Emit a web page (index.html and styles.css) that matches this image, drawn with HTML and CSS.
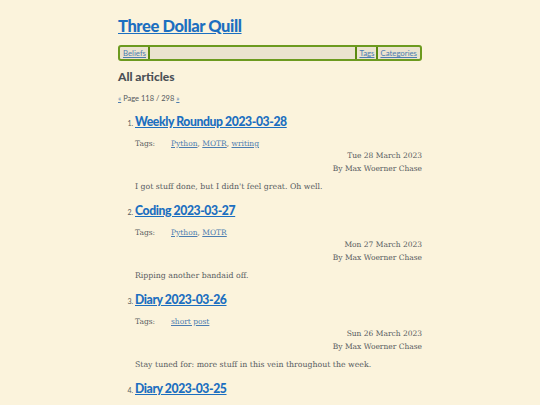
FILE: index.html
```
<!DOCTYPE html>
<html>
<head>
<meta charset="utf-8">
<link rel="stylesheet" href="styles.css">
</head>
<body>
<div class="page">
  <h1 class="site-title"><a href="#">Three Dollar Quill</a></h1>
  <nav class="nav">
    <a href="#" class="nav-item sep-right">Beliefs</a>
    <span class="nav-spacer"></span>
    <a href="#" class="nav-item sep-left">Tags</a>
    <a href="#" class="nav-item sep-left">Categories</a>
  </nav>
  <h2 class="section-title">All articles</h2>
  <p class="pager"><a href="#">«</a> Page 118 / 298 <a href="#">»</a></p>
  <ol class="articles" start="1">
    <li class="article">
      <h3 class="article-title"><a href="#">Weekly Roundup 2023-03-28</a></h3>
      <div class="tags"><span class="tags-label">Tags:</span><span class="tags-list"><a href="#">Python</a>, <a href="#">MOTR</a>, <a href="#">writing</a></span></div>
      <div class="meta">
        <div>Tue 28 March 2023</div>
        <div>By Max Woerner Chase</div>
      </div>
      <p class="summary">I got stuff done, but I didn't feel great. Oh well.</p>
    </li>
    <li class="article">
      <h3 class="article-title"><a href="#">Coding 2023-03-27</a></h3>
      <div class="tags"><span class="tags-label">Tags:</span><span class="tags-list"><a href="#">Python</a>, <a href="#">MOTR</a></span></div>
      <div class="meta">
        <div>Mon 27 March 2023</div>
        <div>By Max Woerner Chase</div>
      </div>
      <p class="summary">Ripping another bandaid off.</p>
    </li>
    <li class="article">
      <h3 class="article-title"><a href="#">Diary 2023-03-26</a></h3>
      <div class="tags"><span class="tags-label">Tags:</span><span class="tags-list"><a href="#">short post</a></span></div>
      <div class="meta">
        <div>Sun 26 March 2023</div>
        <div>By Max Woerner Chase</div>
      </div>
      <p class="summary">Stay tuned for: more stuff in this vein throughout the week.</p>
    </li>
    <li class="article">
      <h3 class="article-title"><a href="#">Diary 2023-03-25</a></h3>
      <div class="tags"><span class="tags-label">Tags:</span><span class="tags-list"><a href="#">short post</a></span></div>
      <div class="meta">
        <div>Sat 25 March 2023</div>
        <div>By Max Woerner Chase</div>
      </div>
      <p class="summary">Short.</p>
    </li>
  </ol>
</div>
</body>
</html>
```

FILE: styles.css
```
html, body {
  margin: 0;
  padding: 0;
  background: #fbf3dc;
}
body {
  font-family: "DejaVu Serif", serif;
  color: #575b5f;
}
a {
  color: #1c6fc0;
}
.page {
  width: 304px;
  margin: 0 auto;
  padding-top: 15px;
}
.site-title {
  font-family: "Lato", "Open Sans", sans-serif;
  font-size: 16.5px;
  font-weight: 900;
  letter-spacing: -0.4px;
  margin: 0 0 8px 0;
  line-height: 22px;
}
.site-title a {
  color: #1c6fc0;
}
.nav {
  display: flex;
  align-items: stretch;
  border: 2px solid #6c9a1f;
  border-radius: 3px;
  background: #ebe3cf;
  height: 12px;
  padding: 0 1px;
  font-family: "Lato", sans-serif;
  font-size: 7.8px;
  line-height: 12px;
}
.nav-item {
  padding: 0 2px;
  color: #4c7db0;
}
.sep-right {
  border-right: 2px solid #5a8a10;
}
.sep-left {
  border-left: 2px solid #5a8a10;
}
.nav-spacer {
  flex: 1;
}
.section-title {
  font-family: "Lato", sans-serif;
  font-size: 12px;
  font-weight: 900;
  color: #4a5056;
  margin: 8px 0 0 0;
  line-height: 16px;
}
.pager {
  font-family: "Lato", sans-serif;
  font-size: 7.5px;
  margin: 8px 0 0 0;
  line-height: 12px;
  color: #555a5e;
}
.pager a {
  color: #4c7db0;
}
.articles {
  margin: 6.5px 0 0 0;
  padding-left: 17px;
  font-size: 6px;
}
.article {
  margin: 0;
  padding: 0;
}
.article::marker {
  font-family: "Lato", sans-serif;
  font-size: 7px;
  color: #555a5e;
}
.article-title {
  font-family: "Lato", sans-serif;
  font-size: 12.2px;
  font-weight: 900;
  letter-spacing: -0.4px;
  margin: 0;
  line-height: 20px;
}
.tags {
  display: flex;
  font-size: 7.5px;
  line-height: 12px;
  margin-top: 6.5px;
}
.tags-label {
  width: 36px;
}
.tags-list a {
  color: #4c7db0;
}
.meta {
  text-align: right;
  font-size: 7.5px;
  line-height: 12.5px;
}
.summary {
  font-size: 7.8px;
  line-height: 12px;
  margin: 6px 0 7.5px 0;
}
```
